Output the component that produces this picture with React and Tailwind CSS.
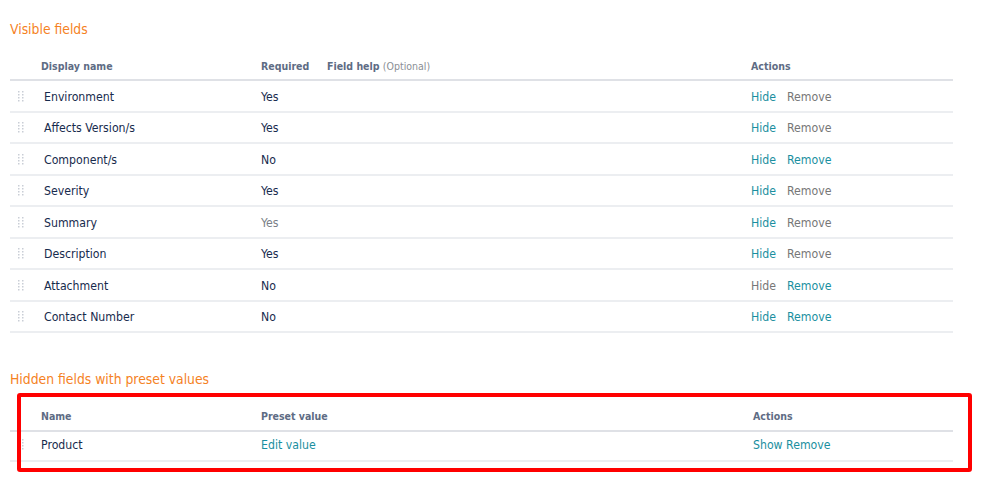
const visibleFields = [
  { name: "Environment", required: "Yes", hide: true, remove: false },
  { name: "Affects Version/s", required: "Yes", hide: true, remove: false },
  { name: "Component/s", required: "No", hide: true, remove: true },
  { name: "Severity", required: "Yes", hide: true, remove: false },
  { name: "Summary", required: "Yes", muted: true, hide: true, remove: false },
  { name: "Description", required: "Yes", hide: true, remove: false },
  { name: "Attachment", required: "No", hide: false, remove: true },
  { name: "Contact Number", required: "No", hide: true, remove: true },
];

function DragHandle() {
  return (
    <svg width="6" height="12" viewBox="0 0 6 12" className="block">
      {[0, 3, 6, 9].map((y) =>
        [0, 4].map((x) => <rect key={`${x}-${y}`} x={x} y={y} width="1.5" height="1.5" fill="#c9ced6" />)
      )}
    </svg>
  );
}

function App() {
  return (
    <div
      className="relative min-h-[489px] bg-white px-[10px] pt-[19px] text-[12.2px] text-[#172b4d]"
      style={{ fontFamily: '"DejaVu Sans Condensed", "DejaVu Sans", Verdana, sans-serif' }}
    >
      <h2 className="text-[13.8px] leading-[20px] text-[#f5821f]">Visible fields</h2>

      <div className="mt-[12px] w-[943px]">
        <div className="flex h-[30px] items-center border-b-2 border-[#dfe1e6] pt-[4px] text-[10.5px] font-bold text-[#5e6c84]">
          <div className="w-[251px] pl-[31px]">Display name</div>
          <div className="w-[66px]">Required</div>
          <div className="w-[424px]">
            Field help <span className="font-normal text-[#8b8f96]">(Optional)</span>
          </div>
          <div>Actions</div>
        </div>

        {visibleFields.map((field) => (
          <div
            key={field.name}
            className="box-border flex h-[31.5px] items-center border-b-2 border-[#eceef1] pt-[2px]"
          >
            <div className="flex w-[34px] justify-start pl-[8px]">
              <DragHandle />
            </div>
            <div className="w-[217px]">{field.name}</div>
            <div className={`w-[490px] ${field.muted ? "text-[#7a7f87]" : ""}`}>{field.required}</div>
            <div className="flex gap-[11px]">
              <span className={field.hide ? "text-[#1a8fa0]" : "text-[#777]"}>Hide</span>
              <span className={field.remove ? "text-[#1a8fa0]" : "text-[#777]"}>Remove</span>
            </div>
          </div>
        ))}
      </div>

      <h2 className="mt-[36px] text-[13.8px] leading-[20px] text-[#f5821f]">Hidden fields with preset values</h2>

      <div className="mt-[13px] w-[943px]">
        <div className="flex h-[30px] items-center border-b-2 border-[#dfe1e6] pt-[2px] text-[10.5px] font-bold text-[#5e6c84]">
          <div className="w-[251px] pl-[31px]">Name</div>
          <div className="w-[492px]">Preset value</div>
          <div>Actions</div>
        </div>
        <div className="box-border flex h-[30px] items-center border-b-2 border-[#eceef1] pb-[2px]">
          <div className="flex w-[31px] pl-[8px]">
            <DragHandle />
          </div>
          <div className="w-[220px]">Product</div>
          <div className="w-[492px] text-[#1a8fa0]">Edit value</div>
          <div className="text-[#1a8fa0]">Show Remove</div>
        </div>
      </div>

      <div className="pointer-events-none absolute left-[17px] top-[393px] h-[79px] w-[955px] rounded-[3px] border-4 border-[#ff0000]" />
    </div>
  );
}

export default App;
